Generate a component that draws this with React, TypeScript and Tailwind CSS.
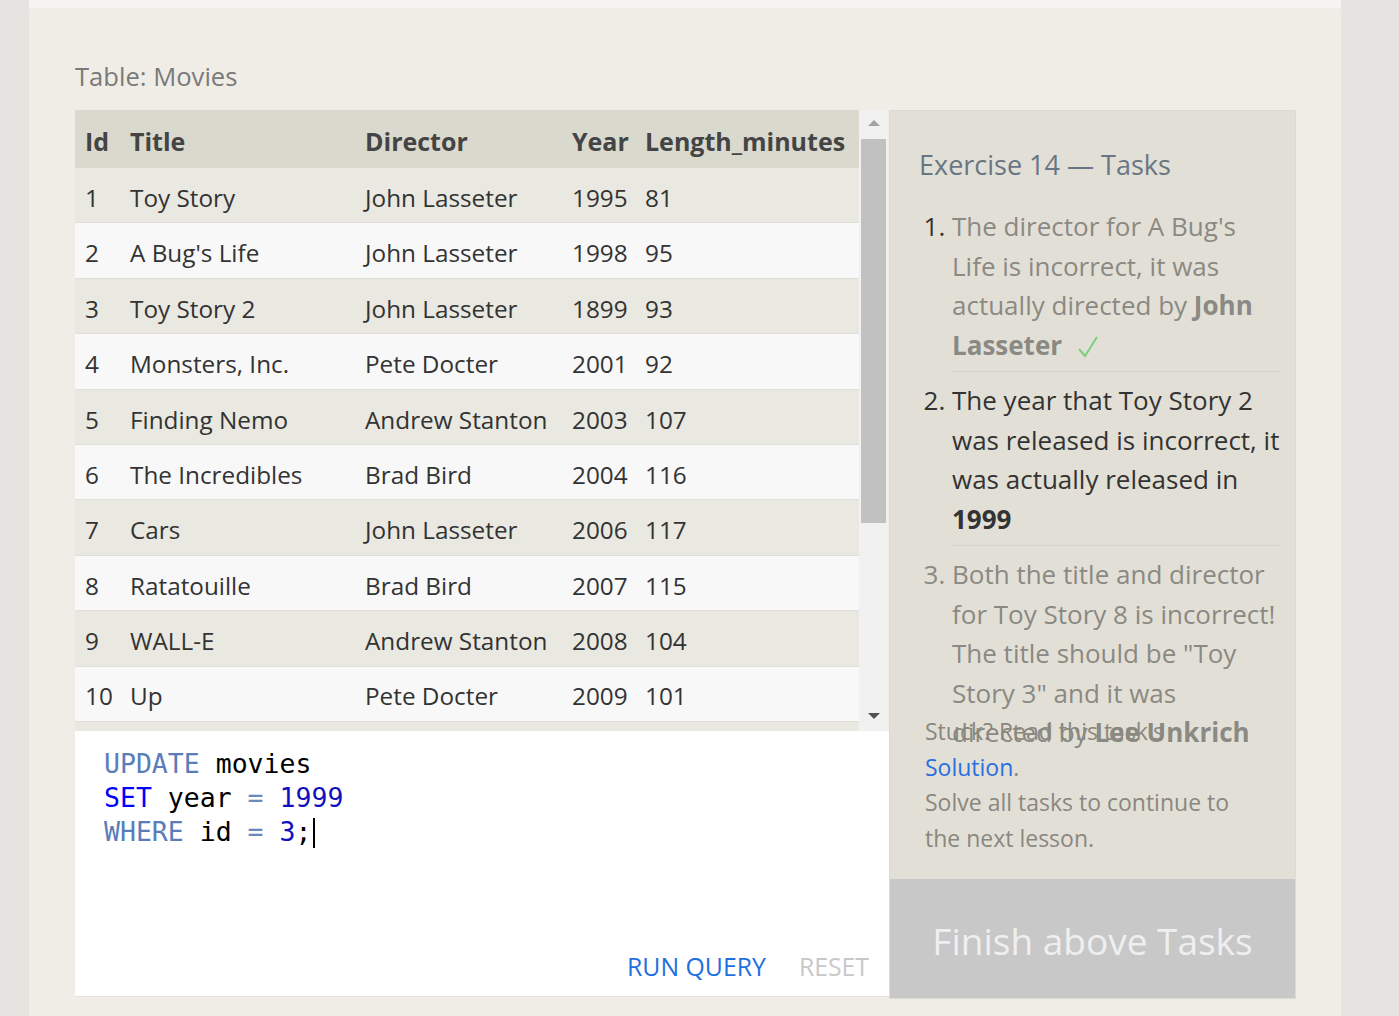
import React from 'react';

const movies = [
    { id: 1, title: 'Toy Story', director: 'John Lasseter', year: 1995, length: 81 },
    { id: 2, title: "A Bug's Life", director: 'John Lasseter', year: 1998, length: 95 },
    { id: 3, title: 'Toy Story 2', director: 'John Lasseter', year: 1899, length: 93 },
    { id: 4, title: 'Monsters, Inc.', director: 'Pete Docter', year: 2001, length: 92 },
    { id: 5, title: 'Finding Nemo', director: 'Andrew Stanton', year: 2003, length: 107 },
    { id: 6, title: 'The Incredibles', director: 'Brad Bird', year: 2004, length: 116 },
    { id: 7, title: 'Cars', director: 'John Lasseter', year: 2006, length: 117 },
    { id: 8, title: 'Ratatouille', director: 'Brad Bird', year: 2007, length: 115 },
    { id: 9, title: 'WALL-E', director: 'Andrew Stanton', year: 2008, length: 104 },
    { id: 10, title: 'Up', director: 'Pete Docter', year: 2009, length: 101 },
    { id: 11, title: 'Toy Story 8', director: 'El Directore', year: 2010, length: 103 },
];

const cols = 'grid grid-cols-[45px_235px_207px_73px_224px]';

export default function App() {
    return (
        <div className="min-h-screen bg-[#e7e3e0] pl-[29px] font-['Open_Sans',sans-serif]">
            <div className="w-[1312px]">
                <div className="h-2 bg-[#f5f4f0]" />
                <div className="h-[1008px] rounded-t-[3px] bg-[#efede6] pl-[46px] pt-[51px]">
                    {/* Table title */}
                    <h2 className="text-[25.6px] leading-[36px] text-[#7a7a7a]">Table: Movies</h2>

                    <div className="mt-[15px] flex">
                        {/* Left: table + editor */}
                        <div className="w-[814px]">
                            <div className="flex h-[621px]">
                                <div className="w-[784px] overflow-hidden text-[24.3px] text-[#333]">
                                    <div className={`${cols} h-[58px] items-center bg-[#d9d9ce] pt-[6px] text-[25px] font-bold text-[#444]`}>
                                        <div className="pl-[10px]">Id</div>
                                        <div className="pl-[10px]">Title</div>
                                        <div className="pl-[10px]">Director</div>
                                        <div className="pl-[10px]">Year</div>
                                        <div className="pl-[10px]">Length_minutes</div>
                                    </div>
                                    {movies.map((m, i) => (
                                        <div
                                            key={m.id}
                                            className={`${cols} h-[55.4px] items-center border-b border-[#dfded8] pt-[6px] ${
                                                i % 2 === 0 ? 'bg-[#e9e8e1]' : 'bg-[#f8f8f8]'
                                            }`}
                                        >
                                            <div className="pl-[10px]">{m.id}</div>
                                            <div className="pl-[10px]">{m.title}</div>
                                            <div className="pl-[10px]">{m.director}</div>
                                            <div className="pl-[10px]">{m.year}</div>
                                            <div className="pl-[10px]">{m.length}</div>
                                        </div>
                                    ))}
                                </div>
                                {/* scrollbar */}
                                <div className="flex w-[29px] flex-col items-center bg-[#f1f1f1] pt-[10px]">
                                    <div className="h-0 w-0 border-x-[6px] border-b-[6px] border-x-transparent border-b-[#a3a3a3]" />
                                    <div className="mt-[13px] h-[384px] w-[25px] bg-[#c1c1c1]" />
                                    <div className="mt-[190px] h-0 w-0 border-x-[6px] border-t-[6px] border-x-transparent border-t-[#505050]" />
                                </div>
                            </div>

                            {/* Editor */}
                            <div className="flex h-[266px] flex-col justify-between border-b border-[#e4e2da] bg-white">
                                <div className="whitespace-pre pl-[29px] pt-[16px] font-['DejaVu_Sans_Mono',monospace] text-[26.5px] leading-[34px] text-black">
                                    <div>
                                        <span className="text-[#5a7db8]">UPDATE</span> movies
                                    </div>
                                    <div>
                                        <span className="text-[#0000ff]">SET</span> year <span className="text-[#6a89bd]">=</span>{' '}
                                        <span className="text-[#1010c0]">1999</span>
                                    </div>
                                    <div className="relative">
                                        <span className="text-[#5a7db8]">WHERE</span> id <span className="text-[#6a89bd]">=</span>{' '}
                                        <span className="text-[#1010c0]">3</span>;
                                        <span className="absolute top-[3px] ml-[2px] h-[30px] w-[2px] bg-black" />
                                    </div>
                                </div>
                                <div className="flex justify-end gap-[33px] pb-[14px] pr-[20px] text-[24.8px] leading-[32px]">
                                    <span className="text-[#1f6fe0]">RUN QUERY</span>
                                    <span className="text-[#c8c8c8]">RESET</span>
                                </div>
                            </div>
                        </div>

                        {/* Right: tasks */}
                        <div className="flex h-[889px] w-[407px] flex-col border border-[#dcdbd2] bg-[#e2e0d6]">
                            <div className="h-[769px] pl-[29px] pr-[14px] pt-[34px]">
                                <h3 className="text-[27px] leading-[40px] text-[#687684]">Exercise 14 — Tasks</h3>
                                <ol className="mt-[22px] h-[507px] list-decimal pl-[33px] text-[26px] leading-[39.5px]">
                                    <li className="border-b border-[#d5d3c9] pb-[6px] text-[#8a8983] marker:text-[#333]">
                                        The director for A Bug's Life is incorrect, it was actually directed by{' '}
                                        <b>John Lasseter</b>
                                        <svg
                                            viewBox="0 0 20 22"
                                            className="ml-[16px] inline-block h-[22px] w-[20px] align-[-3px]"
                                            fill="none"
                                            stroke="#7ccf7c"
                                            strokeWidth="2"
                                        >
                                            <path d="M1 13 L7 20 L19 1" />
                                        </svg>
                                    </li>
                                    <li className="border-b border-[#d5d3c9] pb-[6px] pt-[9px] text-[#333]">
                                        The year that Toy Story 2 was released is incorrect, it was actually released in{' '}
                                        <b>1999</b>
                                    </li>
                                    <li className="pt-[9px] text-[#8a8983]">
                                        Both the title and director for Toy Story 8 is incorrect! The title should be "Toy
                                        Story 3" and it was directed by <b>Lee Unkrich</b>
                                    </li>
                                </ol>
                                <div className="ml-[6px] w-[325px] text-[23px] leading-[35.5px] text-[#8a8780]">
                                    <p>
                                        Stuck? Read this task's <span className="text-[#2a6ee0]">Solution</span>.
                                    </p>
                                    <p>Solve all tasks to continue to the next lesson.</p>
                                </div>
                            </div>
                            <div className="flex h-[119px] items-center justify-center pt-[4px] bg-[#c8c8c8] text-[37px] text-[#efefef]">
                                Finish above Tasks
                            </div>
                        </div>
                    </div>
                </div>
            </div>
        </div>
    );
}
